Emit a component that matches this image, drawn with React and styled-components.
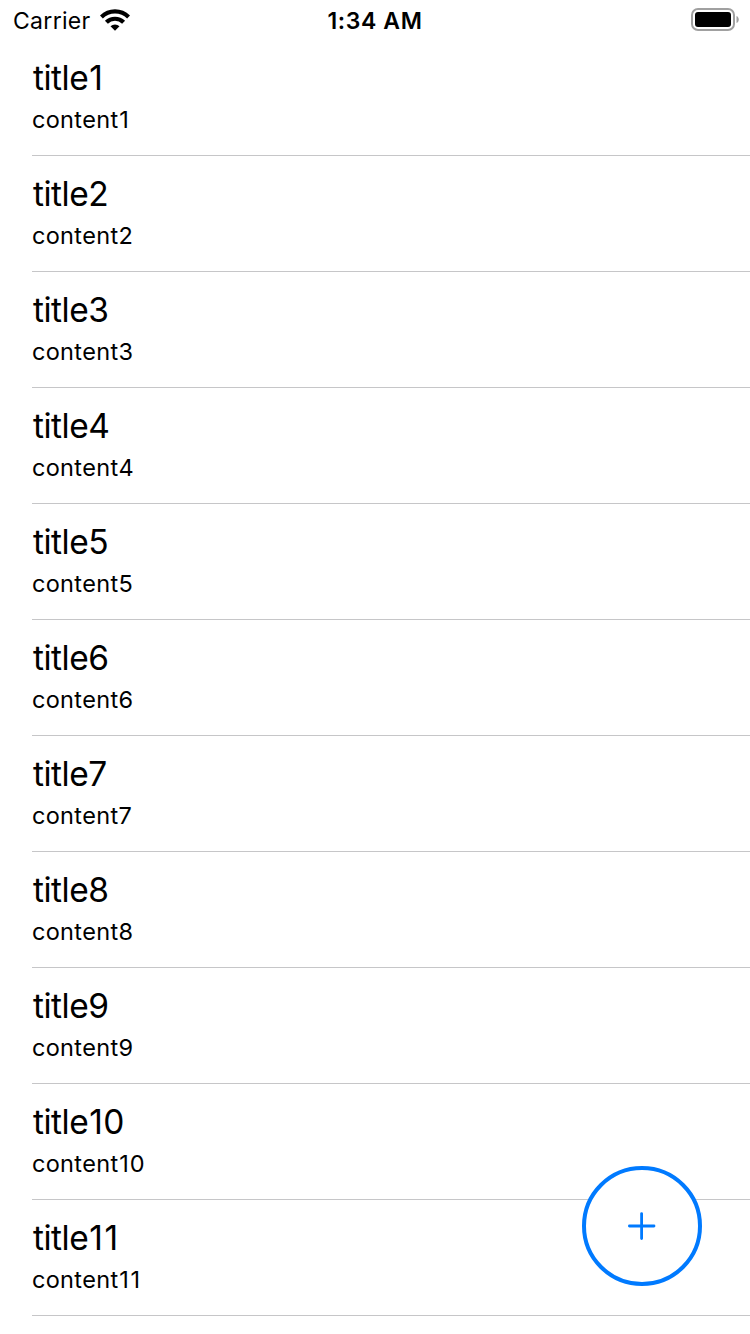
import React from "react";
import styled, { createGlobalStyle } from "styled-components";

const Global = createGlobalStyle`
  * { box-sizing: border-box; }
  body { margin: 0; background: #fff; color: #000; font-family: Inter, "Liberation Sans", sans-serif; overflow: hidden; }
`;
const Screen = styled.main`
  width: 750px; height: 1334px; overflow: hidden; position: relative; background: #fff;
`;
const StatusBar = styled.header`
  height: 40px; display: grid; grid-template-columns: 1fr auto 1fr; align-items: start;
  padding: 0 11px 0 13px; font-size: 23px;
`;
const Carrier = styled.div`
  display: flex; align-items: flex-start; gap: 9px; letter-spacing: 0.3px; line-height: 42px;
`;
const Clock = styled.time`
  font-weight: 580; letter-spacing: 0.6px; line-height: 42px; margin-right: 2px;
`;
const BatterySlot = styled.div`
  display: flex; justify-content: flex-end; padding-top: 8px;
`;
const List = styled.ul`
  margin: 0; padding: 0 0 0 32px; list-style: none;
`;
const Row = styled.li`
  height: 116px; padding-top: 17px; border-bottom: 1px solid #c6c6c8; font-kerning: none;
`;
const Title = styled.div`
  font-size: 33.5px; line-height: 42px; letter-spacing: -0.5px; padding-left: 1px;
`;
const Content = styled.div`
  font-size: 23.5px; line-height: 30px; margin-top: 6px; letter-spacing: 0.3px;
`;
const Digit = styled.span`
  margin: ${({ $narrow }) => ($narrow ? "0 0.025em 0 0.035em" : "0")};
`;
const AddButton = styled.button`
  position: absolute; left: 582px; top: 1166px; width: 120px; height: 120px; padding: 0;
  border: 4px solid #007aff; border-radius: 50%; background: #fff;
  display: flex; align-items: center; justify-content: center;
`;
const WifiIcon = styled.svg`
  margin-top: 9px;
`;

const Numeral = ({ value }) =>
  [...String(value)].map((digit, i) => (
    <Digit key={i} $narrow={digit === "1"}>{digit}</Digit>
  ));

const Wifi = () => (
  <WifiIcon width="30" height="23" viewBox="0 0 30 23" fill="none" stroke="#000" strokeWidth="4.2">
    <path d="M1.4 8a19.5 19.5 0 0 1 27.2 0" />
    <path d="M6.4 13.3a12.2 12.2 0 0 1 17.2 0" />
    <path d="M15 21.8l-4.5-4.5a6.5 6.5 0 0 1 9 0z" fill="#000" stroke="none" />
  </WifiIcon>
);
const Battery = () => (
  <svg width="48" height="24" viewBox="0 0 48 24">
    <rect x="1" y="1" width="42" height="21" rx="6" fill="none" stroke="#a0a0a0" strokeWidth="2" />
    <rect x="4" y="4" width="36" height="15" rx="3" />
    <path d="M45.5 8c3 1 3 6 0 7z" fill="#a0a0a0" />
  </svg>
);

export default function App() {
  return (
    <Screen>
      <Global />
      <StatusBar>
        <Carrier>Carrier <Wifi /></Carrier>
        <Clock>1:34 AM</Clock>
        <BatterySlot><Battery /></BatterySlot>
      </StatusBar>
      <List>
        {Array.from({ length: 11 }, (_, i) => (
          <Row key={i}>
            <Title>title<Numeral value={i + 1} /></Title>
            <Content>content<Numeral value={i + 1} /></Content>
          </Row>
        ))}
      </List>
      <AddButton aria-label="Add">
        <svg width="28" height="28" viewBox="0 0 28 28" stroke="#007aff" strokeWidth="2.8" strokeLinecap="round">
          <path d="M13.6 1.6v25M1.4 14h24.6" />
        </svg>
      </AddButton>
    </Screen>
  );
}
